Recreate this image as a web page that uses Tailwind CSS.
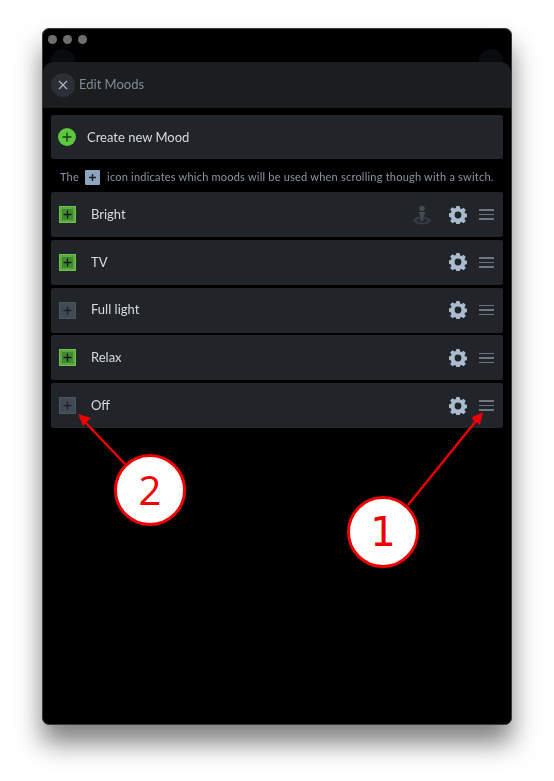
<!DOCTYPE html>
<html lang="en">

<head>
    <meta charset="UTF-8">
    <meta name="viewport" content="width=device-width, initial-scale=1.0">
    <script src="https://cdn.jsdelivr.net/npm/@tailwindcss/browser@4"></script>
    <title>Edit Moods</title>
</head>

<body class="bg-white h-[781px] overflow-hidden font-['Lato',sans-serif]">

    <!-- window -->
    <div class="relative ml-[42px] mt-[28px] w-[470px] h-[697px] bg-black rounded-[7px] border border-[#3a3a3a] overflow-hidden shadow-[0_18px_26px_rgba(0,0,0,0.5)]">
      <div class="blur-[0.4px]">
        <div class="flex gap-[6px] pl-[5px] pt-[6px] h-[33px]">
            <span class="w-[9px] h-[9px] rounded-full bg-[#6e6e6e]"></span>
            <span class="w-[9px] h-[9px] rounded-full bg-[#6e6e6e]"></span>
            <span class="w-[9px] h-[9px] rounded-full bg-[#6e6e6e]"></span>
        </div>

        <!-- buttons of the page behind the sheet -->
        <span class="absolute left-[8px] top-[20px] w-[24px] h-[24px] rounded-full bg-[#090c0e]"></span>
        <span class="absolute right-[8px] top-[20px] w-[24px] h-[24px] rounded-full bg-[#090c0e]"></span>

        <!-- sheet -->
        <div class="relative rounded-t-[10px] bg-black">
            <div class="flex items-center h-[46px] pl-[8px] gap-[4px] bg-[#1c1d1f] rounded-t-[10px]">
                <span class="flex items-center justify-center w-[24px] h-[24px] rounded-full bg-[#2c3036]">
                    <svg width="10" height="10" viewBox="0 0 10 10" fill="none" stroke="#aab4c0" stroke-width="1.2">
                        <path d="M1 1l8 8M9 1l-8 8" />
                    </svg>
                </span>
                <h2 class="text-[13px] text-[#808b99]">Edit Moods</h2>
            </div>

            <div class="px-[8px] pt-[7px]">
                <button class="flex items-center w-full h-[44px] pl-[7px] gap-[11px] bg-[#212429] rounded-[2px]">
                    <svg width="18" height="18" viewBox="0 0 18 18">
                        <circle cx="9" cy="9" r="9" fill="#5cc73f" />
                        <path d="M9 4.5v9M4.5 9h9" stroke="#1c3a1a" stroke-width="1.4" />
                    </svg>
                    <span class="pt-[1px] text-[13px] text-[#d6dbe0]">Create new Mood</span>
                </button>

                <p class="flex items-center h-[33px] pt-[3px] pl-[9px] text-[11px] tracking-[0.22px] text-[#8b95a3] whitespace-nowrap">
                    The
                    <span class="flex items-center justify-center w-[15px] h-[15px] ml-[6px] mr-[7px] rounded-[1px] bg-[#8ea3bd]">
                        <svg width="9" height="9" viewBox="0 0 9 9"><path d="M4.5 1v7M1 4.5h7" stroke="#1d2127" stroke-width="1.5" /></svg>
                    </span>
                    icon indicates which moods will be used when scrolling though with a switch.
                </p>

                <ul class="flex flex-col gap-[2.75px]">
                    <li class="flex items-center h-[45px] pl-[8px] pr-[9px] bg-[#212429] rounded-[2px]">
                        <span class="flex items-center justify-center w-[17px] h-[17px] bg-[#5aa83f] border border-[#6fc04f]">
                            <span class="flex items-center justify-center w-[11px] h-[11px] bg-[#3f8a30]">
                                <svg width="9" height="9" viewBox="0 0 9 9"><path d="M4.5 0.5v8M0.5 4.5h8" stroke="#0f1a0d" stroke-width="1.4" /></svg>
                            </span>
                        </span>
                        <span class="ml-[15px] text-[13px] text-[#d6dbe0]">Bright</span>
                        <svg class="ml-auto mr-[17px]" width="20" height="20" viewBox="0 0 20 20">
                            <ellipse cx="10" cy="15.5" rx="9" ry="4" fill="#343a41" />
                            <ellipse cx="10" cy="15.5" rx="5" ry="2" fill="#25282d" />
                            <circle cx="10" cy="3.5" r="2.8" fill="#444b54" />
                            <path d="M6.5 7h7l-2.2 5v4h-2.6v-4z" fill="#444b54" />
                        </svg>
                        <svg class="mr-[12px]" width="18" height="18" viewBox="0 0 18 18">
                            <path fill="#a9bccf" fill-rule="evenodd" d="M7.4 0h3.2l.5 2.4 1.5.6 2-1.3 2.2 2.2-1.3 2 .6 1.5 2.4.5v3.2l-2.4.5-.6 1.5 1.3 2-2.2 2.2-2-1.3-1.5.6-.5 2.4H7.4l-.5-2.4-1.5-.6-2 1.3-2.2-2.2 1.3-2-.6-1.5L-.5 10.6V7.4l2.4-.5.6-1.5-1.3-2 2.2-2.2 2 1.3 1.5-.6zM9 5.6a3.4 3.4 0 1 0 0 6.8 3.4 3.4 0 0 0 0-6.8z" />
                        </svg>
                        <span class="flex flex-col gap-[3px] w-[15px]">
                            <i class="h-[1.5px] bg-[#6f7780]"></i>
                            <i class="h-[1.5px] bg-[#6f7780]"></i>
                            <i class="h-[1.5px] bg-[#6f7780]"></i>
                        </span>
                    </li>
                    <li class="flex items-center h-[45px] pl-[8px] pr-[9px] bg-[#212429] rounded-[2px]">
                        <span class="flex items-center justify-center w-[17px] h-[17px] bg-[#5aa83f] border border-[#6fc04f]">
                            <span class="flex items-center justify-center w-[11px] h-[11px] bg-[#3f8a30]">
                                <svg width="9" height="9" viewBox="0 0 9 9"><path d="M4.5 0.5v8M0.5 4.5h8" stroke="#0f1a0d" stroke-width="1.4" /></svg>
                            </span>
                        </span>
                        <span class="ml-[15px] text-[13px] text-[#d6dbe0]">TV</span>
                        <svg class="ml-auto mr-[12px]" width="18" height="18" viewBox="0 0 18 18">
                            <path fill="#a9bccf" fill-rule="evenodd" d="M7.4 0h3.2l.5 2.4 1.5.6 2-1.3 2.2 2.2-1.3 2 .6 1.5 2.4.5v3.2l-2.4.5-.6 1.5 1.3 2-2.2 2.2-2-1.3-1.5.6-.5 2.4H7.4l-.5-2.4-1.5-.6-2 1.3-2.2-2.2 1.3-2-.6-1.5L-.5 10.6V7.4l2.4-.5.6-1.5-1.3-2 2.2-2.2 2 1.3 1.5-.6zM9 5.6a3.4 3.4 0 1 0 0 6.8 3.4 3.4 0 0 0 0-6.8z" />
                        </svg>
                        <span class="flex flex-col gap-[3px] w-[15px]">
                            <i class="h-[1.5px] bg-[#6f7780]"></i>
                            <i class="h-[1.5px] bg-[#6f7780]"></i>
                            <i class="h-[1.5px] bg-[#6f7780]"></i>
                        </span>
                    </li>
                    <li class="flex items-center h-[45px] pl-[8px] pr-[9px] bg-[#212429] rounded-[2px]">
                        <span class="flex items-center justify-center w-[17px] h-[17px] bg-[#414a55] border border-[#4b5560]">
                            <svg width="9" height="9" viewBox="0 0 9 9"><path d="M4.5 0.5v8M0.5 4.5h8" stroke="#1d2127" stroke-width="1.4" /></svg>
                        </span>
                        <span class="ml-[15px] text-[13px] text-[#d6dbe0]">Full light</span>
                        <svg class="ml-auto mr-[12px]" width="18" height="18" viewBox="0 0 18 18">
                            <path fill="#a9bccf" fill-rule="evenodd" d="M7.4 0h3.2l.5 2.4 1.5.6 2-1.3 2.2 2.2-1.3 2 .6 1.5 2.4.5v3.2l-2.4.5-.6 1.5 1.3 2-2.2 2.2-2-1.3-1.5.6-.5 2.4H7.4l-.5-2.4-1.5-.6-2 1.3-2.2-2.2 1.3-2-.6-1.5L-.5 10.6V7.4l2.4-.5.6-1.5-1.3-2 2.2-2.2 2 1.3 1.5-.6zM9 5.6a3.4 3.4 0 1 0 0 6.8 3.4 3.4 0 0 0 0-6.8z" />
                        </svg>
                        <span class="flex flex-col gap-[3px] w-[15px]">
                            <i class="h-[1.5px] bg-[#6f7780]"></i>
                            <i class="h-[1.5px] bg-[#6f7780]"></i>
                            <i class="h-[1.5px] bg-[#6f7780]"></i>
                        </span>
                    </li>
                    <li class="flex items-center h-[45px] pl-[8px] pr-[9px] bg-[#212429] rounded-[2px]">
                        <span class="flex items-center justify-center w-[17px] h-[17px] bg-[#5aa83f] border border-[#6fc04f]">
                            <span class="flex items-center justify-center w-[11px] h-[11px] bg-[#3f8a30]">
                                <svg width="9" height="9" viewBox="0 0 9 9"><path d="M4.5 0.5v8M0.5 4.5h8" stroke="#0f1a0d" stroke-width="1.4" /></svg>
                            </span>
                        </span>
                        <span class="ml-[15px] text-[13px] text-[#d6dbe0]">Relax</span>
                        <svg class="ml-auto mr-[12px]" width="18" height="18" viewBox="0 0 18 18">
                            <path fill="#a9bccf" fill-rule="evenodd" d="M7.4 0h3.2l.5 2.4 1.5.6 2-1.3 2.2 2.2-1.3 2 .6 1.5 2.4.5v3.2l-2.4.5-.6 1.5 1.3 2-2.2 2.2-2-1.3-1.5.6-.5 2.4H7.4l-.5-2.4-1.5-.6-2 1.3-2.2-2.2 1.3-2-.6-1.5L-.5 10.6V7.4l2.4-.5.6-1.5-1.3-2 2.2-2.2 2 1.3 1.5-.6zM9 5.6a3.4 3.4 0 1 0 0 6.8 3.4 3.4 0 0 0 0-6.8z" />
                        </svg>
                        <span class="flex flex-col gap-[3px] w-[15px]">
                            <i class="h-[1.5px] bg-[#6f7780]"></i>
                            <i class="h-[1.5px] bg-[#6f7780]"></i>
                            <i class="h-[1.5px] bg-[#6f7780]"></i>
                        </span>
                    </li>
                    <li class="flex items-center h-[45px] pl-[8px] pr-[9px] bg-[#212429] rounded-[2px]">
                        <span class="flex items-center justify-center w-[17px] h-[17px] bg-[#414a55] border border-[#4b5560]">
                            <svg width="9" height="9" viewBox="0 0 9 9"><path d="M4.5 0.5v8M0.5 4.5h8" stroke="#1d2127" stroke-width="1.4" /></svg>
                        </span>
                        <span class="ml-[15px] text-[13px] text-[#d6dbe0]">Off</span>
                        <svg class="ml-auto mr-[12px]" width="18" height="18" viewBox="0 0 18 18">
                            <path fill="#a9bccf" fill-rule="evenodd" d="M7.4 0h3.2l.5 2.4 1.5.6 2-1.3 2.2 2.2-1.3 2 .6 1.5 2.4.5v3.2l-2.4.5-.6 1.5 1.3 2-2.2 2.2-2-1.3-1.5.6-.5 2.4H7.4l-.5-2.4-1.5-.6-2 1.3-2.2-2.2 1.3-2-.6-1.5L-.5 10.6V7.4l2.4-.5.6-1.5-1.3-2 2.2-2.2 2 1.3 1.5-.6zM9 5.6a3.4 3.4 0 1 0 0 6.8 3.4 3.4 0 0 0 0-6.8z" />
                        </svg>
                        <span class="flex flex-col gap-[3px] w-[15px]">
                            <i class="h-[1.5px] bg-[#6f7780]"></i>
                            <i class="h-[1.5px] bg-[#6f7780]"></i>
                            <i class="h-[1.5px] bg-[#6f7780]"></i>
                        </span>
                    </li>
                </ul>
            </div>
        </div>
      </div>
    </div>

    <!-- red annotations -->
    <svg class="absolute top-0 left-0" width="554" height="781" viewBox="0 0 554 781" fill="none">
        <path d="M125 464L85 422" stroke="#f00000" stroke-width="2.4" />
        <path d="M78 414l13 4-8 8z" fill="#f00000" />
        <path d="M408 505L476 421" stroke="#f00000" stroke-width="2.4" />
        <path d="M483 412l-3 13-9-7z" fill="#f00000" />
    </svg>
    <span class="absolute left-[114px] top-[454px] flex items-center justify-center w-[72px] h-[72px] rounded-full bg-white border-[3px] border-[#f00000] text-[40px] text-[#f00000] font-['Open_Sans',sans-serif]">2</span>
    <span class="absolute left-[347px] top-[496px] flex items-center justify-center w-[72px] h-[72px] rounded-full bg-white border-[3px] border-[#f00000] text-[40px] text-[#f00000] font-['DejaVu_Sans',sans-serif]">1</span>

</body>

</html>
